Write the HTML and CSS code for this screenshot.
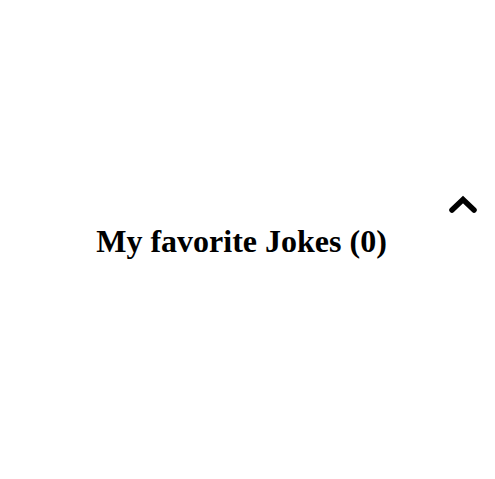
FILE: index.html
```html
<!DOCTYPE html>
<html>
<head>
<meta charset="utf-8">
<link rel="stylesheet" href="styles.css">
</head>
<body>
<div class="page">
  <div class="toggle-row">
    <button class="toggle" aria-label="collapse">
      <svg width="30" height="20" viewBox="0 0 30 20"><path d="M4 16 L15 5.5 L26 16" fill="none" stroke="#000" stroke-width="5.5" stroke-linejoin="miter" stroke-linecap="round"/></svg>
    </button>
  </div>
  <h2 class="title">My favorite Jokes (0)</h2>
</div>
</body>
</html>
```
FILE: styles.css
```css
html, body { margin: 0; padding: 0; background: #fff; }
body { font-family: "Liberation Serif", "Times New Roman", serif; color: #000; }
.page { display: flex; flex-direction: column; padding-top: 194px; }
.toggle-row { display: flex; justify-content: flex-end; padding-right: 17px; }
.toggle { border: 0; background: none; padding: 0; margin: 0; width: 30px; height: 20px; display: block; }
.toggle svg { display: block; }
.title { margin: 9px 0 0; text-align: center; font-size: 32px; font-weight: bold; padding-right: 12px; }
```
